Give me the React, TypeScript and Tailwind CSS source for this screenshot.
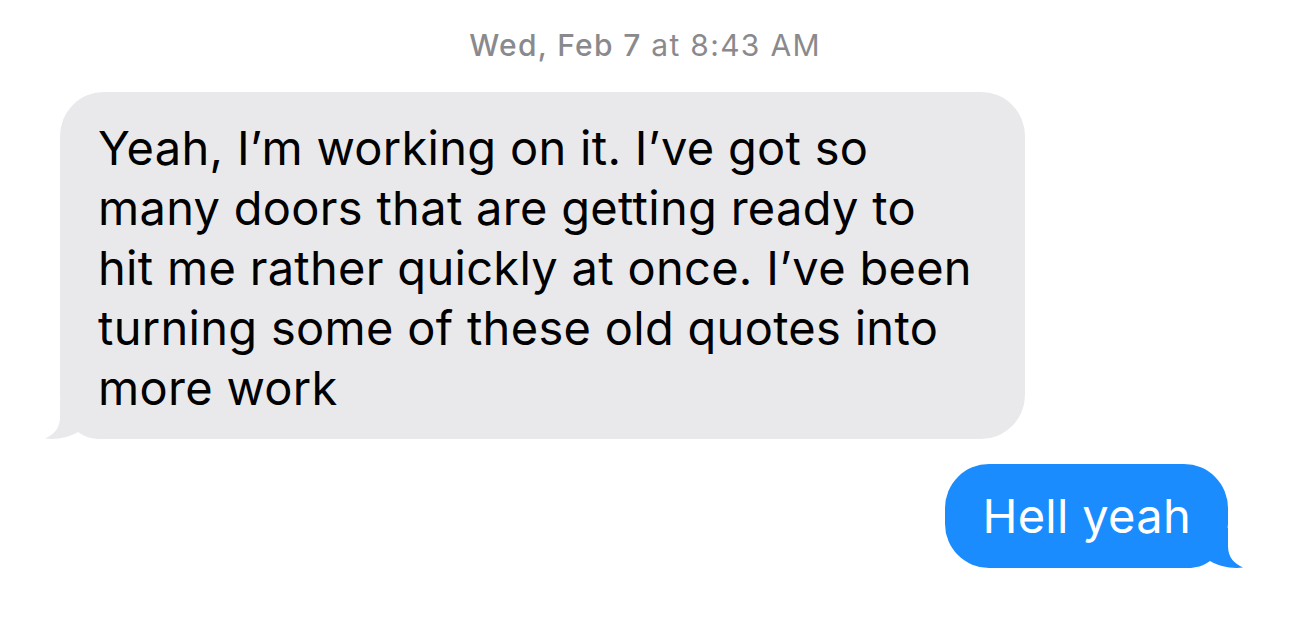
export default function App() {
  const lines = [
    "Yeah, I\u2019m working on it. I\u2019ve got so",
    "many doors that are getting ready to",
    "hit me rather quickly at once. I\u2019ve been",
    "turning some of these old quotes into",
    "more work",
  ];

  const tail =
    "M15 0 L15 18 C15 30 8 36 0 39.5 C12 41 25 38 33 33 C40 38 47 40 55 40 L60 40 L60 0 Z";

  return (
    <div
      className="h-[629px] w-full overflow-hidden bg-white"
      style={{ fontFamily: 'Inter, "Noto Sans", sans-serif' }}
    >
      {/* Timestamp */}
      <div className="pt-[28px] text-center text-[30px] leading-[34px] tracking-[1.3px] text-[#8a8a8e]">
        <span className="font-medium">Wed, Feb 7</span> at 8:43 AM
      </div>

      {/* Incoming bubble */}
      <div className="mt-[30px] pl-[60px]">
        <div className="relative w-[965px] rounded-[44px] bg-[#e9e9eb] px-[38px] pt-[26px] pb-[21px] text-[47px] leading-[60px] tracking-[0.3px] text-black">
          <svg
            className="absolute bottom-0 left-[-15px]"
            width="60"
            height="40"
            viewBox="0 0 60 40"
          >
            <path d={tail} fill="#e9e9eb" />
          </svg>
          <div className="relative">
            {lines.map((l) => (
              <div key={l} className="whitespace-nowrap">
                {l}
              </div>
            ))}
          </div>
        </div>
      </div>

      {/* Outgoing bubble */}
      <div className="mt-[25px] flex justify-end pr-[62px]">
        <div className="relative rounded-[44px] bg-[#1b8cfe] px-[37px] pt-[22px] pb-[22px] text-[47px] leading-[60px] tracking-[0.3px] text-white">
          <svg
            className="absolute bottom-0 right-[-15px] -scale-x-100"
            width="60"
            height="40"
            viewBox="0 0 60 40"
          >
            <path d={tail} fill="#1b8cfe" />
          </svg>
          <span className="relative">Hell yeah</span>
        </div>
      </div>
    </div>
  );
}
